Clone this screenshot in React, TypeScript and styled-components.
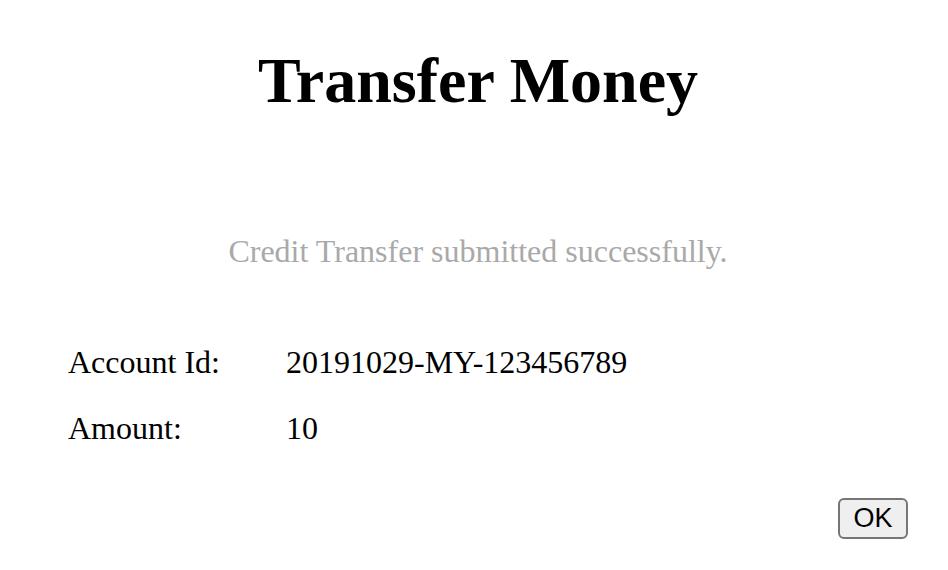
import React from "react";
import styled, { createGlobalStyle } from "styled-components";

const GlobalStyle = createGlobalStyle`
  body {
    margin: 0;
    background-color: #ffffff;
    font-family: "Liberation Serif", "Times New Roman", serif;
    color: #000000;
  }
`;

const Page = styled.div`
  display: flex;
  flex-direction: column;
  width: 948px;
  height: 570px;
`;

const Title = styled.h1`
  margin: 0;
  padding: 44px 0 0 8px;
  font-size: 64px;
  font-weight: bold;
  line-height: 74px;
  text-align: center;
`;

const Message = styled.p`
  margin: 115px 0 0;
  padding-left: 8px;
  color: #a9a9a9;
  font-size: 32px;
  line-height: 37px;
  text-align: center;
`;

const Details = styled.div`
  display: grid;
  grid-template-columns: 218px auto;
  row-gap: 29px;
  margin-top: 74px;
  padding-left: 68px;
  font-size: 32px;
  line-height: 37px;
`;

const Label = styled.span``;

const Value = styled.span``;

const Footer = styled.div`
  display: flex;
  justify-content: flex-end;
  margin-top: 51px;
  padding-right: 40px;
`;

const OkButton = styled.button`
  height: 41px;
  width: 70px;
  padding: 0;
  border: 2px solid #767676;
  border-radius: 6px;
  background-color: #efefef;
  color: #000000;
  font-family: "Liberation Sans", Arial, sans-serif;
  font-size: 27px;
  line-height: 1;
  cursor: pointer;
`;

interface Detail {
  label: string;
  value: string;
}

const details: Detail[] = [
  { label: "Account Id:", value: "20191029-MY-123456789" },
  { label: "Amount:", value: "10" },
];

export default function App() {
  return (
    <>
      <GlobalStyle />
      <Page>
        <Title>Transfer Money</Title>
        <Message>Credit Transfer submitted successfully.</Message>
        <Details>
          {details.map((d) => (
            <React.Fragment key={d.label}>
              <Label>{d.label}</Label>
              <Value>{d.value}</Value>
            </React.Fragment>
          ))}
        </Details>
        <Footer>
          <OkButton>OK</OkButton>
        </Footer>
      </Page>
    </>
  );
}
